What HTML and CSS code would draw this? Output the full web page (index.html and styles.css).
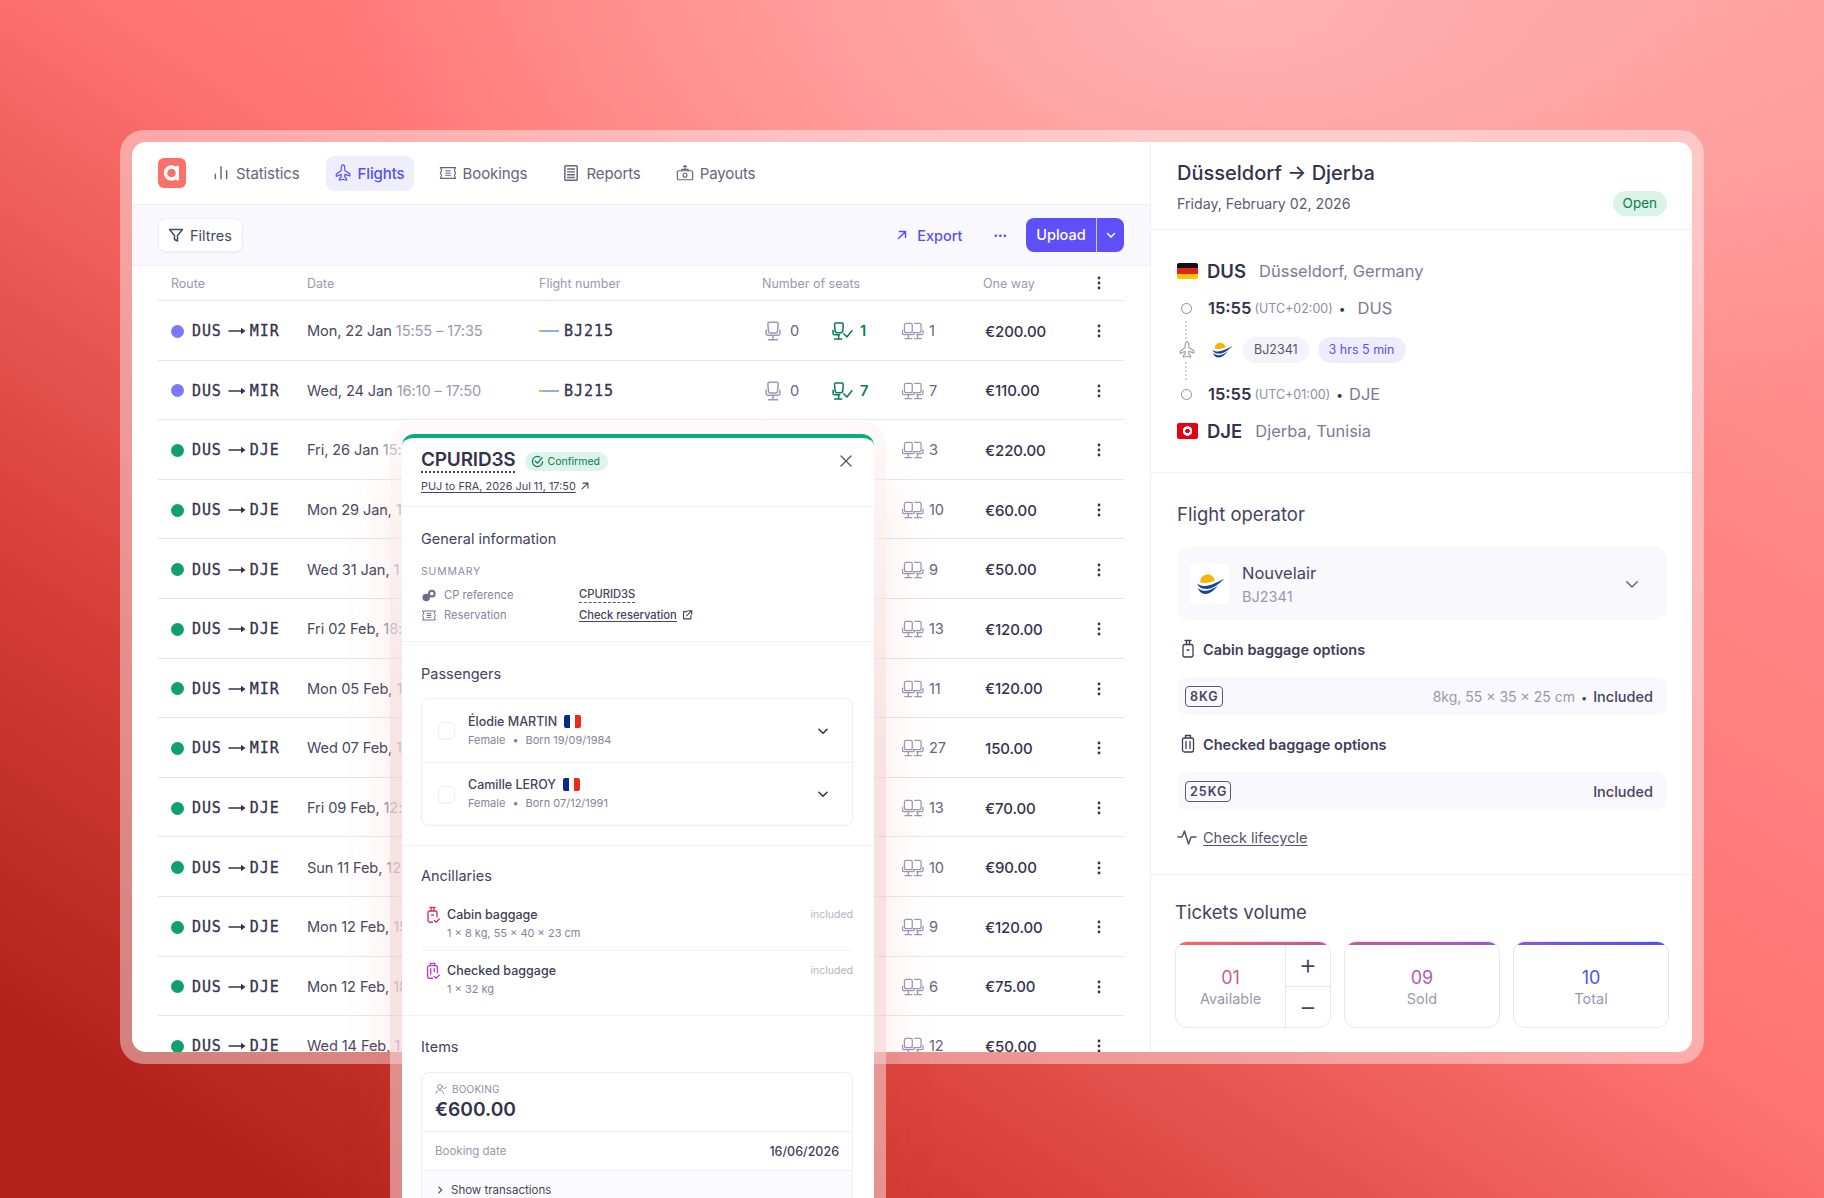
FILE: index.html
```html
<!DOCTYPE html>
<html>
<head>
  <meta charset="utf-8">
  <title>Flights</title>
  <link rel="stylesheet" href="styles.css">
</head>
<body>
<svg class="sprites" width="0" height="0">
  <symbol id="i-stats" viewBox="0 0 16 16"><path d="M3 13V9M8 13V2.500M13 13V6"/></symbol>
  <symbol id="i-plane" viewBox="0 0 20 20"><path d="M10 1c1.300 0 2 1.900 2 3.600v2.600l5.500 3.600v2.400L12 11.500v3l2 1.600v1.900l-4-1-4 1v-1.900l2-1.600v-3l-5.500 2.300v-2.400L8 7.200V4.600C8 2.900 8.700 1 10 1z"/></symbol>
  <symbol id="i-ticket" viewBox="0 0 20 20"><path d="M1.500 4h17l-1.500 3 1.500 3-1.500 3 1.500 3h-17L3 13l-1.500-3L3 7z"/><path d="M7.500 7.500h5M7.500 10h5M7.500 12.500h5"/></symbol>
  <symbol id="i-report" viewBox="0 0 16 16"><rect x="2.500" y="1.500" width="11" height="13" rx="1"/><path d="M5 4.500h6M5 7h6M5 9.500h6M5 12h6"/></symbol>
  <symbol id="i-payout" viewBox="0 0 20 20"><rect x="1.500" y="7.500" width="17" height="10" rx="1.500"/><circle cx="10" cy="12.500" r="2.200"/><path d="M10 5.500V1.500M8.500 3 10 1.500 11.500 3M6.500 7.500V6h7v1.500"/></symbol>
  <symbol id="i-filter" viewBox="0 0 16 16"><path d="M1.500 2.500h13L9.500 8.500V14l-3-1.500v-4z"/></symbol>
  <symbol id="i-out" viewBox="0 0 12 12"><path d="M2.500 9.500l7-7M3.500 2.500h6v6"/></symbol>
  <symbol id="i-chev" viewBox="0 0 12 12"><path d="M2.500 4.500 6 8l3.500-3.500"/></symbol>
  <symbol id="i-arr" viewBox="0 0 18 10"><path d="M1 5h14"/><path class="solid" d="M13 1.800 17.500 5 13 8.200z"/></symbol>
  <symbol id="i-seat" viewBox="3 1.500 14 17.500"><path d="M7 2.500h6a1.500 1.500 0 0 1 1.500 1.500l-.5 6c0 1.200-.8 2-2 2H8c-1.200 0-2-.8-2-2l-.5-6A1.500 1.500 0 0 1 7 2.500z"/><path d="M4 9.500v3c0 1 .8 1.500 1.500 1.500h9c.7 0 1.500-.5 1.500-1.500v-3M10 14v3.500M6 18h8"/></symbol>
  <symbol id="i-seat-ok" viewBox="2.500 1.500 20.500 17.500"><path d="M6.500 2.500h5.500a1.500 1.500 0 0 1 1.500 1.500l-.5 5.500c0 1.500-.8 2.500-2 2.500H7.500c-1.200 0-2-1-2-2.500L5 4a1.500 1.500 0 0 1 1.500-1.500z"/><path d="M3.500 9.500v3c0 1 .8 1.500 1.500 1.500h5M9 14v3.500M5 18h7M14 13l3 3 5-6"/></symbol>
  <symbol id="i-seats" viewBox="1 1.500 22.500 17.500"><path d="M5 2.500h5a1.500 1.500 0 0 1 1.500 1.500v6c0 1.200-.8 2-2 2h-4c-1.200 0-2-.8-2-2V4A1.500 1.500 0 0 1 5 2.500z"/><path d="M14 2.500h5A1.500 1.500 0 0 1 20.500 4v6c0 1.200-.8 2-2 2h-6"/><path d="M1.500 9.500v3c0 1 .8 1.500 1.500 1.500h9c.7 0 1.500-.5 1.500-1.500M16 14h5c.7 0 1.500-.5 1.500-1.500v-3M7.500 14v3.500M4 18h7M17 14v3.500M14 18h7"/></symbol>
  <symbol id="i-kebab" viewBox="0 0 16 16"><circle class="solid" cx="8" cy="3" r="1.400"/><circle class="solid" cx="8" cy="8" r="1.400"/><circle class="solid" cx="8" cy="13" r="1.400"/></symbol>
  <symbol id="i-logo" viewBox="0 0 40 30"><path fill="#f4b400" d="M8 13a9 9 0 0 1 18-2c-6 2-12 3.500-18 2z"/><path fill="#14479b" d="M4 14c6 6 16 4 34-6-8 8-16 14-24 13-5 0-9-3-10-7z"/><path fill="#14479b" d="M5 20c7 6 15 4 25-3-6 8-12 11-17 10.500-4-.5-7-3.500-8-7.500z"/></symbol>
  <symbol id="i-cabin" viewBox="0 0 16 20"><path d="M5 1.500h6M6.500 1.500v4M9.500 1.500v4"/><rect x="3" y="5.500" width="10" height="12.500" rx="2"/><path d="M7 11h2"/></symbol>
  <symbol id="i-checked" viewBox="0 0 16 20"><path d="M5.500 4V1.500h5V4"/><rect x="2.500" y="4" width="11" height="14" rx="2"/><path d="M6 7.500v7M10 7.500v7"/></symbol>
  <symbol id="i-cabin-ok" viewBox="0 0 16 20"><path d="M5 1.500h6M6.500 1.500v4M9.500 1.500v4"/><path d="M8 18H5a2 2 0 0 1-2-2V7.500a2 2 0 0 1 2-2h6a2 2 0 0 1 2 2V12"/><path d="M7 10h2M10 16l2 2 3.500-3.500"/></symbol>
  <symbol id="i-checked-ok" viewBox="0 0 16 20"><path d="M5.500 4V1.500h5V4"/><path d="M8 18H4.500a2 2 0 0 1-2-2V6a2 2 0 0 1 2-2h7a2 2 0 0 1 2 2v6"/><path d="M6 7.500v6M10 7.500v3M10 16l2 2 3.500-3.500"/></symbol>
  <symbol id="i-pulse" viewBox="0 0 20 20"><path d="M1 10h4l2.500-6 4 13 2.500-7h5"/></symbol>
  <symbol id="i-close" viewBox="0 0 14 14"><path d="M2 2l10 10M12 2 2 12"/></symbol>
  <symbol id="i-ok" viewBox="0 0 14 14"><path d="M12.500 7A5.500 5.500 0 1 1 9.500 2.100"/><path d="M4.500 6.500l2.200 2.200 5.300-5.700"/></symbol>
  <symbol id="i-ext" viewBox="0 0 14 14"><path d="M7 3H3v8.500h8.500V8M8 2h4.500v4.500M12.500 2 6.500 8"/></symbol>
  <symbol id="i-link" viewBox="0 0 16 16"><circle class="solid" cx="5" cy="10" r="4"/><circle cx="11" cy="6" r="3" stroke-width="2.200"/></symbol>
  <symbol id="i-person" viewBox="0 0 16 16"><circle cx="6.500" cy="5" r="3"/><path d="M1.500 14c.5-3 2.500-4.500 5-4.500s4.500 1.500 5 4.500M11 6.500l1.500 1.500 2.500-3"/></symbol>
  <symbol id="i-brand" viewBox="0 0 28 30"><circle cx="13.500" cy="15" r="6" stroke-width="3.400"/><path d="M19.500 9v12" stroke-width="3"/></symbol>
</svg>

<main class="frame">
  <div class="card">
    <section class="board">
      <nav class="nav">
        <svg class="brand"><use href="#i-brand"/></svg>
        <a class="nav-item"><svg class="ico"><use href="#i-stats"/></svg>Statistics</a>
        <a class="nav-item active"><svg class="ico"><use href="#i-plane"/></svg>Flights</a>
        <a class="nav-item"><svg class="ico"><use href="#i-ticket"/></svg>Bookings</a>
        <a class="nav-item"><svg class="ico"><use href="#i-report"/></svg>Reports</a>
        <a class="nav-item"><svg class="ico"><use href="#i-payout"/></svg>Payouts</a>
      </nav>
      <div class="toolbar">
        <button class="filter"><svg class="ico-f"><use href="#i-filter"/></svg>Filtres</button>
        <a class="export"><svg class="ico-sm"><use href="#i-out"/></svg>Export</a>
        <span class="more">•••</span>
        <div class="upload">
          <span class="upload-main">Upload</span>
          <span class="upload-side"><svg class="ico-sm"><use href="#i-chev"/></svg></span>
        </div>
      </div>
      <div class="table">
        <div class="row head">
          <span>Route</span><span>Date</span><span>Flight number</span><span>Number of seats</span><span>One way</span>
          <svg class="kebab"><use href="#i-kebab"/></svg>
        </div>
        <div class="row">
          <span class="route"><i class="dot purple"></i>DUS<svg class="arr"><use href="#i-arr"/></svg>MIR</span>
          <span>Mon, 22 Jan <em>15:55 – 17:35</em></span>
          <span class="flight"><i class="mini"></i>BJ215</span>
          <span class="seats"><span class="seat"><svg><use href="#i-seat"/></svg>0</span><span class="seat ok"><svg><use href="#i-seat-ok"/></svg>1</span><span class="seat all"><svg><use href="#i-seats"/></svg>1</span></span>
          <span class="price">€200.00</span>
          <svg class="kebab"><use href="#i-kebab"/></svg>
        </div>
        <div class="row">
          <span class="route"><i class="dot purple"></i>DUS<svg class="arr"><use href="#i-arr"/></svg>MIR</span>
          <span>Wed, 24 Jan <em>16:10 – 17:50</em></span>
          <span class="flight"><i class="mini"></i>BJ215</span>
          <span class="seats"><span class="seat"><svg><use href="#i-seat"/></svg>0</span><span class="seat ok"><svg><use href="#i-seat-ok"/></svg>7</span><span class="seat all"><svg><use href="#i-seats"/></svg>7</span></span>
          <span class="price">€110.00</span>
          <svg class="kebab"><use href="#i-kebab"/></svg>
        </div>
        <div class="row">
          <span class="route"><i class="dot green"></i>DUS<svg class="arr"><use href="#i-arr"/></svg>DJE</span>
          <span>Fri, 26 Jan <em>15:</em></span><span></span>
          <span class="seats"><span class="seat all"><svg><use href="#i-seats"/></svg>3</span></span>
          <span class="price">€220.00</span>
          <svg class="kebab"><use href="#i-kebab"/></svg>
        </div>
        <div class="row">
          <span class="route"><i class="dot green"></i>DUS<svg class="arr"><use href="#i-arr"/></svg>DJE</span>
          <span>Mon 29 Jan, <em>1</em></span><span></span>
          <span class="seats"><span class="seat all"><svg><use href="#i-seats"/></svg>10</span></span>
          <span class="price">€60.00</span>
          <svg class="kebab"><use href="#i-kebab"/></svg>
        </div>
        <div class="row">
          <span class="route"><i class="dot green"></i>DUS<svg class="arr"><use href="#i-arr"/></svg>DJE</span>
          <span>Wed 31 Jan, <em>1</em></span><span></span>
          <span class="seats"><span class="seat all"><svg><use href="#i-seats"/></svg>9</span></span>
          <span class="price">€50.00</span>
          <svg class="kebab"><use href="#i-kebab"/></svg>
        </div>
        <div class="row">
          <span class="route"><i class="dot green"></i>DUS<svg class="arr"><use href="#i-arr"/></svg>DJE</span>
          <span>Fri 02 Feb, <em>18:</em></span><span></span>
          <span class="seats"><span class="seat all"><svg><use href="#i-seats"/></svg>13</span></span>
          <span class="price">€120.00</span>
          <svg class="kebab"><use href="#i-kebab"/></svg>
        </div>
        <div class="row">
          <span class="route"><i class="dot green"></i>DUS<svg class="arr"><use href="#i-arr"/></svg>MIR</span>
          <span>Mon 05 Feb, <em>1</em></span><span></span>
          <span class="seats"><span class="seat all"><svg><use href="#i-seats"/></svg>11</span></span>
          <span class="price">€120.00</span>
          <svg class="kebab"><use href="#i-kebab"/></svg>
        </div>
        <div class="row">
          <span class="route"><i class="dot green"></i>DUS<svg class="arr"><use href="#i-arr"/></svg>MIR</span>
          <span>Wed 07 Feb, <em>1</em></span><span></span>
          <span class="seats"><span class="seat all"><svg><use href="#i-seats"/></svg>27</span></span>
          <span class="price">150.00</span>
          <svg class="kebab"><use href="#i-kebab"/></svg>
        </div>
        <div class="row">
          <span class="route"><i class="dot green"></i>DUS<svg class="arr"><use href="#i-arr"/></svg>DJE</span>
          <span>Fri 09 Feb, <em>12:</em></span><span></span>
          <span class="seats"><span class="seat all"><svg><use href="#i-seats"/></svg>13</span></span>
          <span class="price">€70.00</span>
          <svg class="kebab"><use href="#i-kebab"/></svg>
        </div>
        <div class="row">
          <span class="route"><i class="dot green"></i>DUS<svg class="arr"><use href="#i-arr"/></svg>DJE</span>
          <span>Sun 11 Feb, <em>12</em></span><span></span>
          <span class="seats"><span class="seat all"><svg><use href="#i-seats"/></svg>10</span></span>
          <span class="price">€90.00</span>
          <svg class="kebab"><use href="#i-kebab"/></svg>
        </div>
        <div class="row">
          <span class="route"><i class="dot green"></i>DUS<svg class="arr"><use href="#i-arr"/></svg>DJE</span>
          <span>Mon 12 Feb, <em>15</em></span><span></span>
          <span class="seats"><span class="seat all"><svg><use href="#i-seats"/></svg>9</span></span>
          <span class="price">€120.00</span>
          <svg class="kebab"><use href="#i-kebab"/></svg>
        </div>
        <div class="row">
          <span class="route"><i class="dot green"></i>DUS<svg class="arr"><use href="#i-arr"/></svg>DJE</span>
          <span>Mon 12 Feb, <em>18</em></span><span></span>
          <span class="seats"><span class="seat all"><svg><use href="#i-seats"/></svg>6</span></span>
          <span class="price">€75.00</span>
          <svg class="kebab"><use href="#i-kebab"/></svg>
        </div>
        <div class="row">
          <span class="route"><i class="dot green"></i>DUS<svg class="arr"><use href="#i-arr"/></svg>DJE</span>
          <span>Wed 14 Feb, <em>1</em></span><span></span>
          <span class="seats"><span class="seat all"><svg><use href="#i-seats"/></svg>12</span></span>
          <span class="price">€50.00</span>
          <svg class="kebab"><use href="#i-kebab"/></svg>
        </div>
      </div>
    </section>

    <aside class="detail">
      <header class="detail-head">
        <h1>Düsseldorf → Djerba</h1>
        <div class="detail-sub">Friday, February 02, 2026<span class="open">Open</span></div>
      </header>
      <div class="trip">
        <div class="stop"><i class="flag de"></i><strong>DUS</strong><span>Düsseldorf, Germany</span></div>
        <div class="leg l1"><i class="ring"></i><strong>15:55</strong><small>(UTC+02:00)</small><u>•</u><span class="wide">DUS</span></div>
        <div class="hop"><span class="rail"><svg class="ico plane"><use href="#i-plane"/></svg></span><svg class="logo-sm"><use href="#i-logo"/></svg><span class="chip">BJ2341</span><span class="chip time">3 hrs 5 min</span></div>
        <div class="leg l2"><i class="ring"></i><strong>15:55</strong><small>(UTC+01:00)</small><u>•</u><span>DJE</span></div>
        <div class="stop s2"><i class="flag tn"></i><strong>DJE</strong><span>Djerba, Tunisia</span></div>
      </div>
      <div class="operator">
        <h2>Flight operator</h2>
        <div class="op-card">
          <span class="op-logo"><svg><use href="#i-logo"/></svg></span>
          <div class="op-name">Nouvelair<small>BJ2341</small></div>
          <svg class="ico-md"><use href="#i-chev"/></svg>
        </div>
        <h3><svg class="ico-bag"><use href="#i-cabin"/></svg>Cabin baggage options</h3>
        <div class="bag-row"><span class="kg">8KG</span><span class="bag-info">8kg, 55 × 35 × 25 cm<u>•</u><b>Included</b></span></div>
        <h3><svg class="ico-bag"><use href="#i-checked"/></svg>Checked baggage options</h3>
        <div class="bag-row"><span class="kg">25KG</span><span class="bag-info"><b>Included</b></span></div>
        <a class="lifecycle"><svg><use href="#i-pulse"/></svg><span>Check lifecycle</span></a>
      </div>
      <div class="volume">
        <h2>Tickets volume</h2>
        <div class="tiles">
          <div class="tile t1">
            <div class="tile-main"><b>01</b>Available</div>
            <div class="stepper"><span>+</span><span>−</span></div>
          </div>
          <div class="tile t2"><div class="tile-main"><b>09</b>Sold</div></div>
          <div class="tile t3"><div class="tile-main"><b>10</b>Total</div></div>
        </div>
      </div>
    </aside>
  </div>
</main>

<div class="modal-wrap">
  <div class="modal">
    <header class="m-head">
      <div class="m-title"><span class="ref">CPURID3S</span><span class="confirmed"><svg><use href="#i-ok"/></svg>Confirmed</span><svg class="m-close"><use href="#i-close"/></svg></div>
      <a class="m-link"><span>PUJ to FRA, 2026 Jul 11, 17:50</span><svg><use href="#i-out"/></svg></a>
    </header>
    <section class="m-sec general">
      <h4>General information</h4>
      <div class="caps">SUMMARY</div>
      <div class="kv"><span class="k"><svg><use href="#i-link"/></svg>CP reference</span><span class="v dashed">CPURID3S</span></div>
      <div class="kv"><span class="k"><svg><use href="#i-ticket"/></svg>Reservation</span><span class="v"><u>Check reservation</u><svg class="ext"><use href="#i-ext"/></svg></span></div>
    </section>
    <section class="m-sec pax">
      <h4>Passengers</h4>
      <div class="pax-box">
        <div class="pax-row">
          <i class="check"></i>
          <div class="pax-name"><div>Élodie MARTIN<i class="flag fr"></i></div><small>Female<u>•</u>Born 19/09/1984</small></div>
          <svg class="chev-sm"><use href="#i-chev"/></svg>
        </div>
        <div class="pax-row">
          <i class="check"></i>
          <div class="pax-name"><div>Camille LEROY<i class="flag fr"></i></div><small>Female<u>•</u>Born 07/12/1991</small></div>
          <svg class="chev-sm"><use href="#i-chev"/></svg>
        </div>
      </div>
    </section>
    <section class="m-sec anc">
      <h4>Ancillaries</h4>
      <div class="anc-item first">
        <svg class="pink"><use href="#i-cabin-ok"/></svg>
        <div><b>Cabin baggage</b><small>1 × 8 kg, 55 × 40 × 23 cm</small></div>
        <span>included</span>
      </div>
      <div class="anc-item">
        <svg class="violet"><use href="#i-checked-ok"/></svg>
        <div><b>Checked baggage</b><small>1 × 32 kg</small></div>
        <span>included</span>
      </div>
    </section>
    <section class="m-sec items">
      <h4>Items</h4>
      <div class="item-box">
        <div class="item-top">
          <div class="caps"><svg><use href="#i-person"/></svg>BOOKING</div>
          <div class="amount">€600.00</div>
        </div>
        <div class="item-line"><span>Booking date</span><b>16/06/2026</b></div>
        <div class="item-more"><svg><use href="#i-chev"/></svg>Show transactions</div>
      </div>
    </section>
  </div>
</div>
</body>
</html>
```

FILE: styles.css
```css
*, *:before, *:after {
  box-sizing: border-box;
}
html, body {
  margin: 0;
  padding: 0;
  height: 100%;
}
body {
  position: relative;
  width: 1824px;
  height: 1198px;
  overflow: hidden;
  padding: 130px 120px 0;
  font-family: Inter, "Noto Sans", sans-serif;
  font-size: 14px;
  color: #34324f;
  background:
    radial-gradient(ellipse 900px 500px at 68% 0%, #ffb2b2 0%, rgba(255,178,178,0) 100%),
    linear-gradient(to bottom left, #ff9a9a 0%, #ff7472 47%, #d8403a 72%, #b2221b 92%, #b2221b 100%);
}
h1, h2, h3, h4 {
  margin: 0;
  font-weight: 500;
}
em {
  font-style: normal;
}
svg {
  fill: none;
  stroke: currentColor;
  stroke-width: 1.3;
  stroke-linecap: round;
  stroke-linejoin: round;
}
.solid {
  fill: currentColor;
  stroke: none;
}
.sprites {
  position: absolute;
}

/* frame + card */
.frame {
  width: 1584px;
  height: 934px;
  padding: 12px;
  border-radius: 24px;
  background: rgba(255,255,255,.42);
}
.card {
  display: flex;
  height: 100%;
  background: #fff;
  border-radius: 14px;
  overflow: hidden;
}
.board {
  width: 1018px;
  flex-shrink: 0;
}

/* nav */
.nav {
  display: flex;
  align-items: center;
  height: 63px;
  padding-left: 26px;
  border-bottom: 1px solid #f0eff7;
}
.brand {
  width: 28px;
  height: 30px;
  margin-right: 17px;
  border-radius: 6px;
  background: #fc706a;
  color: #fff;
}
.nav-item {
  display: flex;
  align-items: center;
  gap: 6px;
  height: 35px;
  padding: 0 9px;
  margin-right: 17px;
  border-radius: 8px;
  color: #66647e;
  font-size: 15px;
  letter-spacing: -.1px;
}
.nav-item.active {
  background: #eeeefd;
  color: #5a4ff3;
  font-weight: 500;
  padding-left: 8px;
  margin-right: 16px;
}
.ico {
  width: 18px;
  height: 18px;
}
.ico-f {
  width: 16px;
  height: 16px;
  stroke-width: 1.500;
}
.ico-sm {
  width: 12px;
  height: 12px;
  stroke-width: 1.500;
}
.ico-md {
  width: 18px;
  height: 18px;
}

/* toolbar */
.toolbar {
  display: flex;
  align-items: center;
  height: 61px;
  padding: 0 26px;
  background: #f9f8fe;
  border-bottom: 1px solid #f0eff7;
}
.filter {
  display: flex;
  align-items: center;
  gap: 6px;
  height: 34px;
  width: 85px;
  padding: 0 9px;
  border: 1px solid #eeedf6;
  border-radius: 8px;
  background: #fff;
  color: #4a4862;
  font: inherit;
  font-size: 14.5px;
  box-shadow: 0 1px 2px rgba(60,50,120,.06);
}
.export {
  display: flex;
  align-items: center;
  gap: 9px;
  margin-left: auto;
  color: #5a4ff3;
  font-size: 14.5px;
  font-weight: 500;
}
.more {
  margin: 0 19px 0 31px;
  color: #5a4ff3;
  font-size: 8px;
}
.upload {
  display: flex;
  width: 98px;
  height: 34px;
  border-radius: 8px;
  background: #5f4ff8;
  color: #fff;
  font-size: 14.5px;
  font-weight: 500;
  line-height: 34px;
}
.upload-main {
  flex: 1;
  text-align: center;
  border-right: 1px solid #cfcafc;
}
.upload-side {
  display: flex;
  align-items: center;
  justify-content: center;
  width: 27px;
}

/* table */
.table {
  margin: 0 26px;
}
.row {
  display: grid;
  grid-template-columns: 136px 232px 223px 221px 1fr 16px;
  align-items: center;
  height: 59.6px;
  padding: 2px 17px 0 13px;
  border-bottom: 1px solid #e6e5ee;
  color: #4a4862;
  font-size: 14.6px;
  letter-spacing: -.1px;
}
.row.head {
  height: 35px;
  padding-top: 0;
  color: #9a98ae;
  font-size: 12.5px;
  letter-spacing: 0;
}
.row em {
  color: #9a98ae;
}
.kebab {
  width: 16px;
  height: 16px;
  color: #34324f;
}
.route {
  display: flex;
  align-items: center;
  font-family: "DejaVu Sans Mono", monospace;
  font-size: 15px;
  color: #34324f;
  letter-spacing: .9px;
  -webkit-text-stroke: .3px #34324f;
  white-space: nowrap;
}
.arr {
  width: 18px;
  height: 10px;
  margin: 0 4px 0 6px;
  stroke-width: 1.500;
}
.dot {
  width: 13px;
  height: 13px;
  margin-right: 8px;
  border-radius: 50%;
}
.dot.purple {
  background: #7a78fb;
}
.dot.green {
  background: #0f9f70;
}
.flight {
  display: flex;
  align-items: center;
  gap: 5px;
  font-family: "DejaVu Sans Mono", monospace;
  font-size: 15px;
  letter-spacing: 1px;
  color: #34324f;
  -webkit-text-stroke: .3px #34324f;
}
.mini {
  width: 20px;
  height: 2px;
  background: linear-gradient(to right, #d6b94a 0 18%, #8fb0d4 18%);
}
.seats {
  display: flex;
  justify-content: flex-end;
  width: 193px;
  margin-left: 3px;
}
.seat {
  display: flex;
  align-items: center;
  gap: 9px;
  width: 67px;
  color: #66647e;
}
.seat svg {
  width: 16px;
  height: 20px;
  color: #9a98b8;
}
.seat.ok {
  width: 70px;
  gap: 7px;
  color: #0d7a58;
  font-weight: 600;
}
.seat.ok svg {
  width: 21px;
  color: #0d7a58;
  stroke-width: 1.500;
}
.seat.all {
  width: 56px;
  gap: 5px;
}
.seat.all svg {
  width: 22px;
}
.price {
  color: #34324f;
  font-weight: 500;
  font-size: 15px;
  padding-left: 2px;
}

/* right panel */
.detail {
  flex: 1;
  border-left: 1px solid #f0eff7;
  font-size: 14.5px;
}
.detail-head {
  height: 88px;
  padding: 18px 26px 0;
  border-bottom: 1px solid #eeedf5;
}
.detail-head h1 {
  font-size: 20px;
  line-height: 26px;
}
.detail-sub {
  display: flex;
  align-items: center;
  justify-content: space-between;
  margin-top: 5px;
  height: 25px;
  color: #5c5a74;
  font-size: 14.2px;
}
.open {
  padding: 0 10px;
  border-radius: 13px;
  background: #d9f3e7;
  color: #0f7a55;
  font-size: 13.5px;
  line-height: 25px;
}
.trip {
  height: 243px;
  padding: 30px 26px 0;
  border-bottom: 1px solid #f2f1f8;
}
.stop, .leg, .hop {
  display: flex;
  align-items: center;
  height: 22px;
}
.stop strong {
  margin-right: 13px;
  font-size: 18.5px;
  font-weight: 600;
}
.stop span {
  color: #7d7b94;
  font-size: 16.5px;
}
.flag {
  display: block;
  flex-shrink: 0;
  width: 21px;
  height: 16px;
  margin-right: 9px;
  border-radius: 2px;
}
.flag.de {
  background: linear-gradient(#111 0 33%, #e2231a 33% 66%, #f7c600 66%);
}
.flag.tn {
  background: radial-gradient(circle at 50% 50%, #e70013 0 2px, #fff 2.5px 4.5px, #e70013 5px);
}
.flag.fr {
  display: inline-block;
  width: 17px;
  height: 13px;
  margin: 0 0 -2px 7px;
  background: linear-gradient(to right, #0b2a8f 0 33%, #fff 33% 66%, #ee2a1c 66%);
}
.leg {
  margin-top: 15px;
}
.leg.l2 {
  margin-top: 20px;
}
.stop.s2 {
  margin-top: 15px;
}
.ring {
  width: 11px;
  height: 11px;
  margin: 0 16px 0 4px;
  border: 1.500px solid #8e8ca6;
  border-radius: 50%;
}
.leg strong {
  font-size: 16.5px;
  font-weight: 600;
}
.leg small {
  margin-left: 3px;
  color: #8e8ca6;
  font-size: 12.5px;
}
.leg u {
  margin: 0 6px;
  text-decoration: none;
  font-size: 12px;
}
.leg span {
  color: #7d7b94;
  font-size: 16.5px;
}
.leg .wide {
  margin-left: 6px;
}
.hop {
  height: 26px;
  margin-top: 18px;
}
.rail {
  position: relative;
  display: flex;
  justify-content: center;
  width: 19px;
  margin-right: 14px;
}
.rail:before, .rail:after {
  content: "";
  position: absolute;
  left: 8px;
  height: 18px;
  border-left: 2px dotted #d4d3e0;
}
.rail:before {
  top: -20px;
}
.rail:after {
  bottom: -21px;
}
.plane {
  color: #a09eb8;
}
.logo-sm {
  width: 24px;
  height: 18px;
  margin-right: 9px;
  stroke: none;
}
.chip {
  margin-right: 9px;
  padding: 0 11px;
  border-radius: 13px;
  background: #f4f3fb;
  color: #56546e;
  font-size: 12.5px;
  line-height: 26px;
}
.chip.time {
  background: #eeedfd;
  color: #5a4ff3;
}
.operator {
  padding: 29px 26px 0;
  height: 402px;
  border-bottom: 1px solid #f2f1f8;
}
h2 {
  font-size: 18.5px;
  line-height: 24px;
  color: #45435e;
  font-weight: 400;
}
.op-card {
  display: flex;
  align-items: center;
  height: 73px;
  margin-top: 21px;
  padding: 0 26px 0 14px;
  border-radius: 12px;
  background: #f9f8fd;
}
.op-logo {
  display: flex;
  align-items: center;
  justify-content: center;
  width: 38px;
  height: 40px;
  margin-right: 13px;
  border-radius: 4px;
  background: #fff;
}
.op-logo svg {
  width: 32px;
  height: 24px;
  stroke: none;
}
.op-name {
  flex: 1;
  padding-top: 2px;
  font-size: 16.5px;
  line-height: 23px;
  color: #45435e;
}
.op-name small {
  display: block;
  color: #9a98ae;
  font-size: 14.5px;
}
.op-card .ico-md {
  color: #65637e;
  stroke-width: 1;
}
h3 {
  display: flex;
  align-items: center;
  gap: 7px;
  height: 20px;
  margin-top: 19px;
  font-size: 14.5px;
  font-weight: 600;
  color: #3f3d59;
}
.ico-bag {
  width: 16px;
  height: 20px;
  margin-left: 3px;
}
.bag-row {
  display: flex;
  align-items: center;
  justify-content: space-between;
  height: 38px;
  margin-top: 18px;
  padding: 0 14px 0 8px;
  border-radius: 10px;
  background: #f9f8fd;
}
.kg {
  padding: 0 3px 0 4px;
  border: 1.500px solid #5c5a74;
  border-radius: 4px;
  font-size: 12.5px;
  font-weight: 600;
  letter-spacing: 1px;
  line-height: 19px;
  color: #45435e;
}
.bag-info {
  color: #9a98ae;
  font-size: 14px;
}
.bag-info u {
  margin: 0 6px;
  text-decoration: none;
  color: #45435e;
  font-size: 11px;
}
.bag-info b {
  color: #45435e;
  font-size: 14.5px;
  font-weight: 500;
}
.lifecycle {
  display: flex;
  align-items: center;
  gap: 6px;
  height: 20px;
  margin-top: 17px;
  color: #55536d;
}
.lifecycle svg {
  width: 20px;
  height: 20px;
  stroke-width: 1.500;
}
.lifecycle span {
  text-decoration: underline;
  text-underline-offset: 2px;
}
.volume {
  padding: 25px 24px 0;
}
.tiles {
  display: flex;
  gap: 13px;
  margin: 17px 0 0;
  width: 494px;
}
.tile {
  display: flex;
  flex: 1;
  height: 87px;
  border: 1px solid #e8e7ee;
  border-radius: 12px;
  background: #fff;
  overflow: hidden;
  position: relative;
}
.tile:before {
  content: "";
  position: absolute;
  top: -1px;
  left: 0;
  right: 0;
  height: 4px;
}
.t1:before {
  background: linear-gradient(to right, #fc6560, #b85a9c);
}
.t2:before {
  background: linear-gradient(to right, #c45a9a, #9a58cc);
}
.t3:before {
  background: linear-gradient(to right, #8a57d6, #4f50f8);
}
.tile-main {
  flex: 1;
  padding-top: 25px;
  color: #9a98ae;
  font-size: 14.5px;
  line-height: 19px;
  text-align: center;
}
.tile-main b {
  display: block;
  font-size: 18px;
  font-weight: 400;
  line-height: 22px;
}
.t1 b {
  color: #d05a8c;
}
.t2 b {
  color: #b45ab4;
}
.t3 b {
  color: #5250ec;
}
.stepper {
  display: flex;
  flex-direction: column;
  width: 45px;
  border-left: 1px solid #e8e7ee;
  margin-top: 3px;
}
.stepper span {
  flex: 1;
  color: #45435e;
  font-size: 28px;
  font-weight: 300;
  line-height: 38px;
  text-align: center;
}
.stepper span + span {
  border-top: 1px solid #e8e7ee;
}

/* modal */
.modal-wrap {
  position: absolute;
  left: 390px;
  top: 421px;
  width: 496px;
  height: 800px;
  padding: 13px 12px 0;
  border-radius: 24px 24px 0 0;
  background: linear-gradient(rgba(252,240,240,.45), rgba(243,205,205,.6) 45%);
  box-shadow: 0 60px 50px rgba(225,70,70,.12);
}
.modal {
  height: 100%;
  border-top: 4px solid #0cab7f;
  border-radius: 12px 12px 0 0;
  background: #fff;
}
.m-head {
  height: 69px;
  padding: 11px 21px 0 19px;
  border-bottom: 1px solid #f0eff7;
}
.m-title {
  display: flex;
  align-items: center;
  height: 24px;
}
.ref {
  font-size: 19px;
  font-weight: 600;
  color: #34324f;
  letter-spacing: -.2px;
  line-height: 22px;
  border-bottom: 2px dotted #45435e;
}
.confirmed {
  display: flex;
  align-items: center;
  gap: 3px;
  height: 19px;
  margin-left: 10px;
  padding: 0 8px 0 6px;
  border-radius: 10px;
  background: #dcf4e9;
  color: #0f7a55;
  font-size: 10.5px;
}
.confirmed svg {
  width: 13px;
  height: 13px;
}
.m-close {
  width: 14px;
  height: 14px;
  margin-left: auto;
  color: #55536d;
}
.m-link {
  display: flex;
  align-items: center;
  gap: 4px;
  height: 16px;
  margin-top: 5px;
  font-size: 10.9px;
  color: #45435e;
}
.m-link span {
  text-decoration: underline;
  text-underline-offset: 2px;
}
.m-link svg {
  width: 10px;
  height: 10px;
}
.m-sec {
  padding: 22px 21px 0 19px;
  border-bottom: 1px solid #f2f1f8;
}
.m-sec h4 {
  height: 20px;
  font-size: 14.5px;
  font-weight: 400;
  line-height: 20px;
  color: #45435e;
}
.general {
  height: 135px;
}
.caps {
  display: flex;
  align-items: center;
  gap: 5px;
  height: 14px;
  margin-top: 15px;
  color: #8e8ca6;
  font-size: 10.5px;
  letter-spacing: .8px;
}
.kv {
  display: flex;
  align-items: center;
  height: 18px;
  margin-top: 2px;
  font-size: 11.2px;
}
.caps + .kv {
  margin-top: 8px;
}
.k {
  display: flex;
  align-items: center;
  gap: 7px;
  width: 158px;
  color: #8583a0;
}
.k svg {
  width: 16px;
  height: 15px;
  color: #6d6b94;
}
.v {
  display: flex;
  align-items: center;
  gap: 4px;
  color: #45435e;
  font-weight: 500;
}
.v u {
  text-underline-offset: 2px;
}
.v.dashed {
  border-bottom: 1px dashed #55536d;
  line-height: 15px;
}
.ext {
  width: 12px;
  height: 12px;
}
.pax {
  height: 204px;
}
.pax-box {
  margin-top: 14px;
  border: 1px solid #efeef7;
  border-radius: 8px;
}
.pax-row {
  display: flex;
  align-items: center;
  height: 63px;
  padding: 0 22px 0 16px;
}
.pax-row + .pax-row {
  border-top: 1px solid #efeef7;
}
.check {
  width: 17px;
  height: 17px;
  margin-right: 13px;
  border: 1px solid #eeedf6;
  border-radius: 5px;
  box-shadow: 0 1px 2px rgba(60,50,120,.05);
}
.chev-sm {
  width: 14px;
  height: 14px;
  stroke-width: 1.300;
}
.pax-name {
  flex: 1;
  color: #45435e;
  font-size: 12.5px;
  font-weight: 500;
  line-height: 19px;
}
.pax-name small {
  display: block;
  color: #8583a0;
  font-size: 11px;
  font-weight: 400;
}
.pax-name u {
  margin: 0 7px;
  text-decoration: none;
}
.anc {
  height: 170px;
  padding-top: 20px;
}
.anc-item {
  display: flex;
  padding-top: 11px;
}
.anc-item.first {
  height: 45px;
  margin-top: 20px;
  padding-top: 0;
  border-bottom: 1px solid #f2f1f8;
}
.anc-item svg {
  width: 15px;
  height: 18px;
  margin: 0 7px 0 4px;
  stroke-width: 1.500;
}
.pink {
  color: #d62e6a;
}
.violet {
  color: #b93cc8;
}
.anc-item div {
  flex: 1;
  font-size: 12.5px;
  line-height: 18px;
}
.anc-item b {
  font-weight: 500;
  color: #3f3d59;
}
.anc-item small {
  display: block;
  font-size: 11px;
  color: #8583a0;
}
.anc-item span {
  color: #b5b4c6;
  font-size: 10.5px;
  line-height: 18px;
}
.items {
  padding-top: 21px;
  border-bottom: 0;
}
.item-box {
  margin-top: 15px;
  border: 1px solid #efeef7;
  border-radius: 8px 8px 0 0;
}
.item-top {
  height: 59px;
  padding: 9px 13px 0;
  border-bottom: 1px solid #efeef7;
}
.item-top .caps {
  margin: 0;
  font-size: 10px;
  letter-spacing: .2px;
}
.item-top .caps svg {
  width: 12px;
  height: 12px;
}
.amount {
  margin-top: 1px;
  font-size: 19.2px;
  font-weight: 600;
  line-height: 24px;
  color: #34324f;
}
.item-line {
  display: flex;
  align-items: center;
  justify-content: space-between;
  height: 39px;
  padding: 0 13px;
  border-bottom: 1px solid #efeef7;
  color: #9a98ae;
  font-size: 11.5px;
}
.item-line b {
  color: #3f3d59;
  font-size: 12.5px;
  font-weight: 500;
}
.item-more {
  display: flex;
  align-items: center;
  gap: 6px;
  height: 38px;
  padding: 0 13px;
  background: #fbfaff;
  color: #45435e;
  font-size: 11.5px;
}
.item-more svg {
  width: 10px;
  height: 10px;
  transform: rotate(-90deg);
}
```
